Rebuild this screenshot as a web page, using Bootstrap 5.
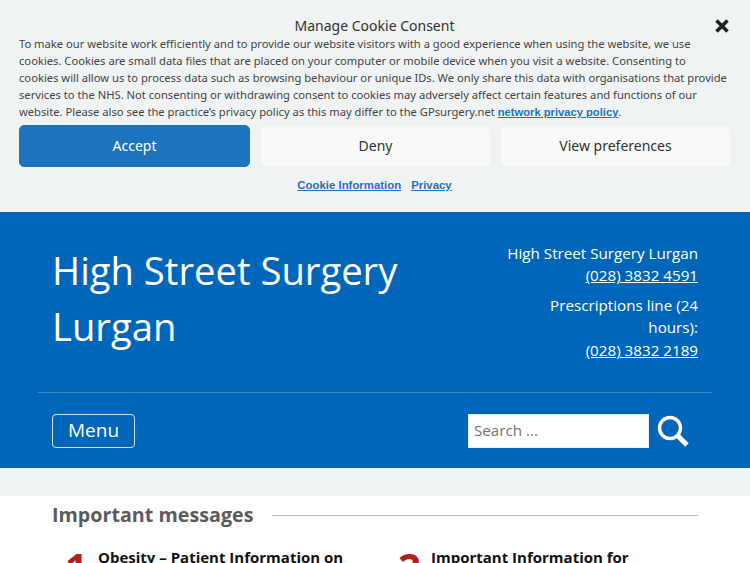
<!DOCTYPE html>
<html lang="en">

<head>
    <meta charset="UTF-8" />
    <meta name="viewport" content="width=device-width, initial-scale=1.0" />
    <title>High Street Surgery Lurgan</title>
    <link href="https://cdn.jsdelivr.net/npm/bootstrap@5.3.3/dist/css/bootstrap.min.css" rel="stylesheet" />
    <style>
        html, body {
            height: 563px;
            overflow: hidden;
        }

        body {
            background-color: #f0f3f4;
            font-family: "Open Sans", sans-serif;
            color: #333;
        }

        .cookie-bar {
            height: 212px;
            padding: 16px 20px 0 19px;
            font-family: "Noto Sans", sans-serif;
            position: relative;
        }

        .cookie-title {
            font-size: 14px;
            line-height: 19px;
            text-align: center;
            color: #333;
        }

        .cookie-close {
            position: absolute;
            top: 18px;
            right: 20px;
        }

        .cookie-text {
            font-size: 11.2px;
            line-height: 17px;
            margin: 0 0 4px;
            color: #444;
        }

        .cookie-link {
            font-family: "Liberation Sans", sans-serif;
            font-size: 11.2px;
            font-weight: 700;
            color: #1e73be;
        }

        .cookie-docs .cookie-link {
            font-size: 11.4px;
        }

        .cookie-btn {
            flex: 1 1 0;
            height: 40px;
            font-size: 14px;
            border: 1px solid #f9f9f9;
            border-radius: 5px;
            background-color: #f9f9f9;
            color: #333;
            padding: 0 0 1px;
        }

        .cookie-accept {
            flex: 0 0 231px;
            height: 42px;
            background-color: #1e73be;
            border-color: #1e73be;
            color: #fff;
        }

        .cookie-btns {
            gap: 11px;
        }

        .cookie-docs {
            gap: 10px;
            margin-top: 10px;
            line-height: 17px;
        }

        .site-head {
            background-color: #0066b9;
            color: #fff;
            height: 256px;
            padding: 0 38px;
        }

        .head-top {
            height: 181px;
            padding: 15px 14px 0;
            border-bottom: 1px solid #3d88c7;
        }

        .site-name {
            font-size: 38.2px;
            line-height: 56px;
            font-weight: 400;
            margin: 15px 0 0;
            width: 400px;
        }

        .site-phones {
            width: 195px;
            font-size: 15.2px;
            line-height: 22.4px;
            text-align: right;
            padding-top: 15px;
        }

        .site-phones p {
            margin: 0 0 7px;
        }

        .site-phones a {
            color: #fff;
        }

        .head-nav {
            padding: 21px 14px 0;
        }

        .menu-btn {
            height: 34px;
            width: 83px;
            padding: 0 0 2px;
            font-size: 19px;
            color: #fff;
            border: 1px solid #cfe0f0;
            border-radius: 4px;
            background: transparent;
        }

        .search-box {
            width: 181px;
            height: 34px;
            border: 1px solid #e8f0f8;
            border-radius: 0;
            padding: 0 5px 2px;
            font-size: 15.2px;
        }

        .search-box::placeholder {
            color: #757575;
            opacity: 1;
        }

        .search-go {
            margin: 0 8px 0 8px;
        }

        .page-main {
            margin-top: 28px;
            height: 67px;
            background-color: #fff;
            padding: 0 52px;
            overflow: hidden;
        }

        .msg-head {
            gap: 19px;
            height: 38px;
        }

        .msg-head h2 {
            font-size: 19.7px;
            font-weight: 700;
            color: #5c5b5a;
            margin: 0;
            white-space: nowrap;
        }

        .msg-rule {
            height: 1px;
            background-color: #bbb;
            flex: 1 1 auto;
        }

        .msg-list {
            margin-top: 13px;
        }

        .msg-item {
            flex: 0 0 333px;
            font-size: 15px;
            line-height: 20px;
            font-weight: 700;
            color: #111;
        }

        .msg-num {
            flex: 0 0 46px;
            padding-left: 13px;
            font-size: 40px;
            line-height: 40px;
            font-weight: 700;
            color: #b71c1c;
        }
    </style>
</head>

<body>
    <div class="cookie-bar">
        <div class="cookie-title">Manage Cookie Consent</div>
        <svg class="cookie-close" width="16" height="16" viewBox="0 0 16 16">
            <path d="M2.5 2.5 13.5 13.5M13.5 2.5 2.5 13.5" stroke="#222" stroke-width="3.6" />
        </svg>
        <p class="cookie-text">To make our website work efficiently and to provide our website visitors with a good experience when using the website, we use cookies. Cookies are small data files that are placed on your computer or mobile device when you visit a website. Consenting to<br />cookies will allow us to process data such as browsing behaviour or unique IDs. We only share this data with organisations that provide services to the NHS. Not consenting or withdrawing consent to cookies may adversely affect certain features and functions of our website. Please also see the practice’s privacy policy as this may differ to the GPsurgery.net <a href="#" class="cookie-link">network privacy policy</a>.</p>
        <div class="d-flex align-items-center cookie-btns">
            <button type="button" class="btn cookie-btn cookie-accept">Accept</button>
            <button type="button" class="btn cookie-btn">Deny</button>
            <button type="button" class="btn cookie-btn">View preferences</button>
        </div>
        <div class="d-flex justify-content-center cookie-docs">
            <a href="#" class="cookie-link">Cookie Information</a>
            <a href="#" class="cookie-link">Privacy</a>
        </div>
    </div>

    <header class="site-head">
        <div class="d-flex justify-content-between head-top">
            <h1 class="site-name">High Street Surgery Lurgan</h1>
            <div class="site-phones">
                <p>High Street Surgery Lurgan<br /><a href="#">(028) 3832 4591</a></p>
                <p>Prescriptions line (24 hours):<br /><a href="#">(028) 3832 2189</a></p>
            </div>
        </div>
        <div class="d-flex justify-content-between head-nav">
            <button type="button" class="btn menu-btn">Menu</button>
            <form class="d-flex align-items-center">
                <input type="text" class="form-control search-box" placeholder="Search ..." />
                <svg class="search-go" width="33" height="33" viewBox="0 0 33 33" fill="none" stroke="#fff">
                    <circle cx="13" cy="13" r="10.5" stroke-width="3.4" />
                    <path d="M21 21 30 30" stroke-width="5" />
                </svg>
            </form>
        </div>
    </header>

    <main class="page-main">
        <div class="d-flex align-items-center msg-head">
            <h2>Important messages</h2>
            <div class="msg-rule"></div>
        </div>
        <div class="d-flex msg-list">
            <div class="d-flex msg-item">
                <div class="msg-num">1</div>
                <div>Obesity – Patient Information on</div>
            </div>
            <div class="d-flex msg-item">
                <div class="msg-num">2</div>
                <div>Important Information for</div>
            </div>
        </div>
    </main>

    <script src="https://cdn.jsdelivr.net/npm/bootstrap@5.3.3/dist/js/bootstrap.bundle.min.js"></script>
</body>
</html>
